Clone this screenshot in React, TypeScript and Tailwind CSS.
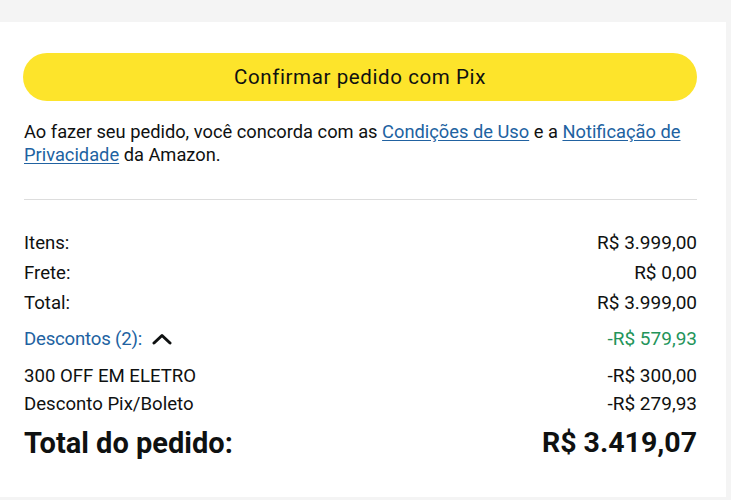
import React from "react";

function Row({
  label,
  value,
  h = "leading-[30px]",
}: {
  label: string;
  value: string;
  h?: string;
}) {
  return (
    <div className={`flex justify-between text-[18.6px] ${h}`}>
      <span>{label}</span>
      <span className="text-[19px]">{value}</span>
    </div>
  );
}

export default function App() {
  return (
    <div
      className="w-[731px] h-[500px] bg-[#f4f4f4] pt-[22px] pr-[5px] pb-[3px] text-[#0f1111]"
      style={{ fontFamily: "Roboto, 'Noto Sans', sans-serif" }}
    >
      <div className="h-full bg-white pl-[23px] pr-[29px] pt-[31px]">
        <button className="flex h-[48px] w-full items-center justify-center rounded-full bg-[#fde42b] text-[20.5px] tracking-[0.6px] text-[#0f1111]">
          Confirmar pedido com Pix
        </button>

        <p className="mt-[19px] pl-px text-[18.3px] leading-[23px]">
          Ao fazer seu pedido, você concorda com as{" "}
          <a className="text-[#2162a1] underline underline-offset-2">Condições de Uso</a> e a{" "}
          <a className="text-[#2162a1] underline underline-offset-2">Notificação de Privacidade</a> da
          Amazon.
        </p>

        <div className="mt-[33px] ml-px h-px bg-[#dddddd]" />

        <div className="mt-[28px] pl-px">
          <Row label="Itens:" value="R$ 3.999,00" />
          <Row label="Frete:" value="R$ 0,00" />
          <Row label="Total:" value="R$ 3.999,00" />

          <div className="mt-[6px] flex justify-between text-[18.6px] leading-[30px]">
            <span className="flex items-center gap-[10px] text-[#2162a1]">
              <span className="tracking-[-0.2px]">Descontos (2):</span>
              <svg width="20" height="12" viewBox="0 0 20 12" className="mt-[-1px]">
                <path
                  d="M2 10 L10 2.5 L18 10"
                  fill="none"
                  stroke="#0f1111"
                  strokeWidth="3"
                  strokeLinecap="round"
                  strokeLinejoin="round"
                />
              </svg>
            </span>
            <span className="text-[19px] text-[#23945a]">-R$ 579,93</span>
          </div>

          <div className="mt-[8px]">
            <Row label="300 OFF EM ELETRO" value="-R$ 300,00" h="leading-[28px]" />
            <Row label="Desconto Pix/Boleto" value="-R$ 279,93" h="leading-[28px]" />
          </div>

          <div className="mt-[7px] flex justify-between text-[29px] font-bold leading-[36px]">
            <span>Total do pedido:</span>
            <span className="text-[28.5px]">R$ 3.419,07</span>
          </div>
        </div>
      </div>
    </div>
  );
}
